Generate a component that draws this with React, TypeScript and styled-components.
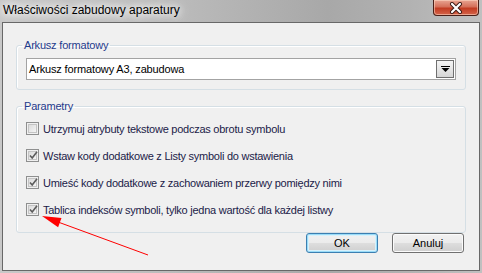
import styled, { createGlobalStyle } from "styled-components";

const GlobalStyle = createGlobalStyle`
  html, body {
    margin: 0;
    padding: 0;
  }
  body {
    width: 482px;
    height: 273px;
    overflow: hidden;
    font-family: "Liberation Sans", Arial, sans-serif;
  }
`;

const Window = styled.div`
  position: relative;
  width: 482px;
  height: 273px;
  display: flex;
  flex-direction: column;
  box-sizing: border-box;
  background: linear-gradient(
    90deg,
    #c8c8c8 0%,
    #bcbcbc 35%,
    #a8a8a8 68%,
    #b2b2b2 85%,
    #c0c0c0 100%
  );
`;

const TitleBar = styled.div`
  height: 22px;
  display: flex;
  align-items: flex-start;
  flex-shrink: 0;
`;

const Title = styled.span`
  padding: 3px 0 0 3px;
  font-size: 12px;
  line-height: 15px;
  color: #000;
  text-shadow: 0 0 6px #fff, 0 0 10px #fff, 0 0 14px #f4f4f4;
`;

const CloseButton = styled.div`
  margin-left: auto;
  margin-right: 3px;
  width: 46px;
  height: 16px;
  box-sizing: border-box;
  display: flex;
  align-items: center;
  justify-content: center;
  border: 1px solid #4a2018;
  border-top: none;
  border-radius: 0 0 4px 4px;
  background: linear-gradient(
    180deg,
    #e8a592 0%,
    #d5705a 45%,
    #c23c22 55%,
    #d4644a 100%
  );
  box-shadow: inset 0 0 0 1px rgba(255, 220, 200, 0.55);
`;

const Client = styled.div`
  flex: 1;
  margin: 0 2px 2px 2px;
  border: 1px solid #686868;
  background: #f0f0f0;
  display: flex;
  flex-direction: column;
  padding: 15px 13px 0 13px;
`;

const GroupBox = styled.fieldset<{ $gap?: number }>`
  margin: ${(p) => p.$gap ?? 0}px 0 0 0;
  padding: ${(p) => (p.$gap ? "2px 9px 9px 9px" : "6px 9px 9px 9px")};
  border: 1px solid #d5dfe5;
  border-radius: 3px;
  box-shadow: inset 1px 1px 0 #fff;
  min-width: 0;
`;

const Legend = styled.legend`
  margin-left: -4px;
  padding: 0 2px;
  font-size: 11px;
  line-height: 14px;
  letter-spacing: -0.2px;
  color: #1f3b8c;
`;

const Select = styled.div`
  height: 22px;
  box-sizing: border-box;
  border: 1px solid #a3a3a3;
  background: #fff;
  display: flex;
  align-items: center;
  padding: 0 1px 0 2px;
  font-size: 11px;
  letter-spacing: -0.15px;
  color: #000;
`;

const SelectText = styled.span`
  flex: 1;
`;

const DropButton = styled.div`
  width: 18px;
  height: 18px;
  box-sizing: border-box;
  border: 1px solid #6f6f6f;
  background: linear-gradient(180deg, #f4f4f4 0%, #e6e6e6 50%, #d6d6d6 100%);
  display: flex;
  align-items: center;
  justify-content: center;
`;

const Row = styled.label`
  height: 27px;
  display: flex;
  align-items: center;
  gap: 4px;
  font-size: 11px;
  letter-spacing: -0.25px;
  color: #1b1b48;
`;

const Box = styled.span`
  width: 13px;
  height: 13px;
  box-sizing: border-box;
  border: 1px solid #8e8f8f;
  padding: 1px;
  display: flex;
  flex-shrink: 0;
`;

const BoxInner = styled.span`
  flex: 1;
  border: 1px solid #c4c4c4;
  background: linear-gradient(135deg, #dcdcdc 0%, #f4f4f4 100%);
  position: relative;
`;

const Mark = styled.svg`
  position: absolute;
  left: -1px;
  top: -2px;
`;

const ButtonRow = styled.div`
  display: flex;
  justify-content: flex-end;
  gap: 14px;
  padding-right: 2px;
  margin-top: 0;
`;

const Button = styled.div<{ $default?: boolean }>`
  width: 72px;
  height: 20px;
  box-sizing: border-box;
  border: 1px solid ${(p) => (p.$default ? "#3c7fb1" : "#707070")};
  border-radius: 3px;
  background: linear-gradient(
    180deg,
    #f2f2f2 0%,
    #ebebeb 48%,
    #dddddd 52%,
    #cfcfcf 100%
  );
  box-shadow: ${(p) =>
    p.$default
      ? "inset 0 0 0 1px #9adcf8, inset 0 0 0 2px #d8f1fb"
      : "inset 0 0 0 1px #fbfbfb"};
  display: flex;
  align-items: center;
  justify-content: center;
  font-size: 11px;
  color: #000;
`;

const Overlay = styled.svg`
  position: absolute;
  left: 0;
  top: 0;
  pointer-events: none;
`;

const Checkbox = ({ checked, label }: { checked: boolean; label: string }) => (
  <Row>
    <Box>
      <BoxInner>
        {checked && (
          <Mark width="11" height="11" viewBox="0 0 11 11">
            <path
              d="M2 5.5 L4.2 8 L9 1.8"
              fill="none"
              stroke="#5c5c5c"
              strokeWidth="1.6"
            />
          </Mark>
        )}
      </BoxInner>
    </Box>
    {label}
  </Row>
);

const options = [
  { checked: false, label: "Utrzymuj atrybuty tekstowe podczas obrotu symbolu" },
  { checked: true, label: "Wstaw kody dodatkowe z Listy symboli do wstawienia" },
  { checked: true, label: "Umieść kody dodatkowe z zachowaniem przerwy pomiędzy nimi" },
  {
    checked: true,
    label: "Tablica indeksów symboli, tylko jedna wartość dla każdej listwy",
  },
];

export default function App() {
  return (
    <>
      <GlobalStyle />
      <Window>
        <TitleBar>
          <Title>Właściwości zabudowy aparatury</Title>
          <CloseButton>
            <svg width="14" height="12" viewBox="0 0 14 12">
              <path
                d="M3 2 L11 10 M11 2 L3 10"
                stroke="#3a1a14"
                strokeWidth="4"
                strokeLinecap="round"
              />
              <path
                d="M3 2 L11 10 M11 2 L3 10"
                stroke="#fff"
                strokeWidth="2.2"
                strokeLinecap="round"
              />
            </svg>
          </CloseButton>
        </TitleBar>
        <Client>
          <GroupBox>
            <Legend>Arkusz formatowy</Legend>
            <Select>
              <SelectText>Arkusz formatowy A3, zabudowa</SelectText>
              <DropButton>
                <svg width="9" height="6" viewBox="0 0 9 6">
                  <path d="M0 0 H9 V1 H0 Z M0.5 2 H8.5 L4.5 6 Z" fill="#000" />
                </svg>
              </DropButton>
            </Select>
          </GroupBox>
          <GroupBox $gap={9}>
            <Legend>Parametry</Legend>
            {options.map((o) => (
              <Checkbox key={o.label} checked={o.checked} label={o.label} />
            ))}
          </GroupBox>
          <ButtonRow>
            <Button $default>OK</Button>
            <Button>Anuluj</Button>
          </ButtonRow>
        </Client>
        <Overlay width="482" height="273" viewBox="0 0 482 273">
          <line x1="148" y1="255" x2="58" y2="222" stroke="#ff0000" strokeWidth="1" />
          <polygon points="42,216 61.5,217.9 58.1,227.3" fill="#ff0000" />
        </Overlay>
      </Window>
    </>
  );
}
